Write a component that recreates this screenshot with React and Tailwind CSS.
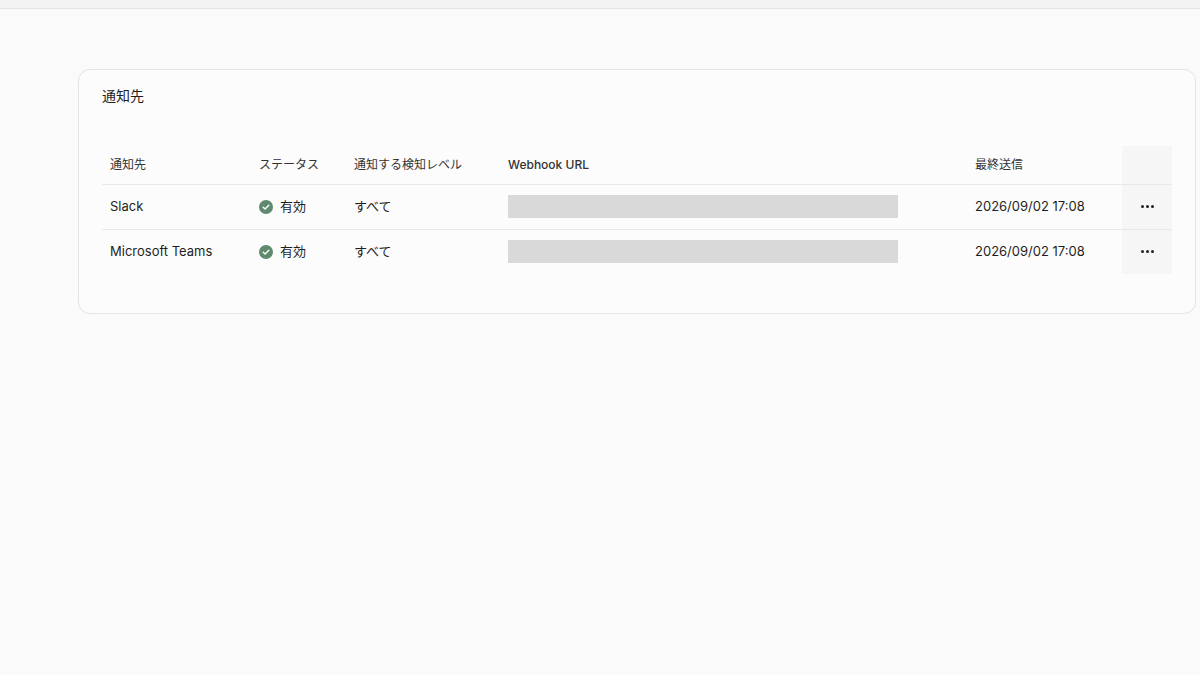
export default function App() {
  const rows = [
    { name: "Slack" },
    { name: "Microsoft Teams" },
  ];
  const font = { fontFamily: 'Inter, "Noto Sans CJK JP", sans-serif' };
  return (
    <div className="min-h-[675px] bg-[#fafafa] text-[#1f1f1f]" style={font}>
      <div className="h-[9px] bg-[#f3f3f3] border-b border-[#e4e4e4]" />
      <div className="pt-[60px] pl-[78px] pr-[4px]">
        <div className="bg-[#fcfcfc] border border-[#e3e3e3] rounded-xl pl-[23px] pr-[24px] pt-[16px] pb-[39px]">
          <h2 className="text-[14px] leading-5 mb-[40px]">通知先</h2>
          <table className="w-[1070px] table-fixed text-[13px] border-collapse">
            <colgroup>
              <col className="w-[149px]" />
              <col className="w-[95px]" />
              <col className="w-[154px]" />
              <col className="w-[467px]" />
              <col className="w-[155px]" />
              <col className="w-[50px]" />
            </colgroup>
            <thead>
              <tr className="h-[38px] border-b border-[#e8e8e8] text-[12px] text-[#333]">
                <th className="text-left font-normal px-2">通知先</th>
                <th className="text-left font-normal px-2">ステータス</th>
                <th className="text-left font-normal px-2">通知する検知レベル</th>
                <th className="text-left font-medium px-2">Webhook URL</th>
                <th className="text-left font-normal px-2">最終送信</th>
                <th className="bg-[#f6f6f6]" />
              </tr>
            </thead>
            <tbody>
              {rows.map((r, i) => (
                <tr key={r.name} className={"h-[45px] " + (i === 0 ? "border-b border-[#e8e8e8]" : "")}>
                  <td className="px-2">{r.name}</td>
                  <td className="px-2">
                    <span className="flex items-center gap-[7px]">
                      <svg width="14" height="14" viewBox="0 0 14 14">
                        <circle cx="7" cy="7" r="7" fill="#5f8a6e" />
                        <path d="M4.2 7.2l1.9 1.8 3.7-3.8" stroke="#fff" strokeWidth="1.4" fill="none" strokeLinecap="round" strokeLinejoin="round" />
                      </svg>
                      有効
                    </span>
                  </td>
                  <td className="px-2">すべて</td>
                  <td className="px-2">
                    <div className="h-[23px] w-[390px] bg-[#d9d9d9]" />
                  </td>
                  <td className="px-2">2026/09/02 17:08</td>
                  <td className="bg-[#f6f6f6]">
                    <span className="flex justify-center gap-[2px]">
                      <span className="w-[3px] h-[3px] rounded-full bg-[#222]" />
                      <span className="w-[3px] h-[3px] rounded-full bg-[#222]" />
                      <span className="w-[3px] h-[3px] rounded-full bg-[#222]" />
                    </span>
                  </td>
                </tr>
              ))}
            </tbody>
          </table>
        </div>
      </div>
    </div>
  );
}
